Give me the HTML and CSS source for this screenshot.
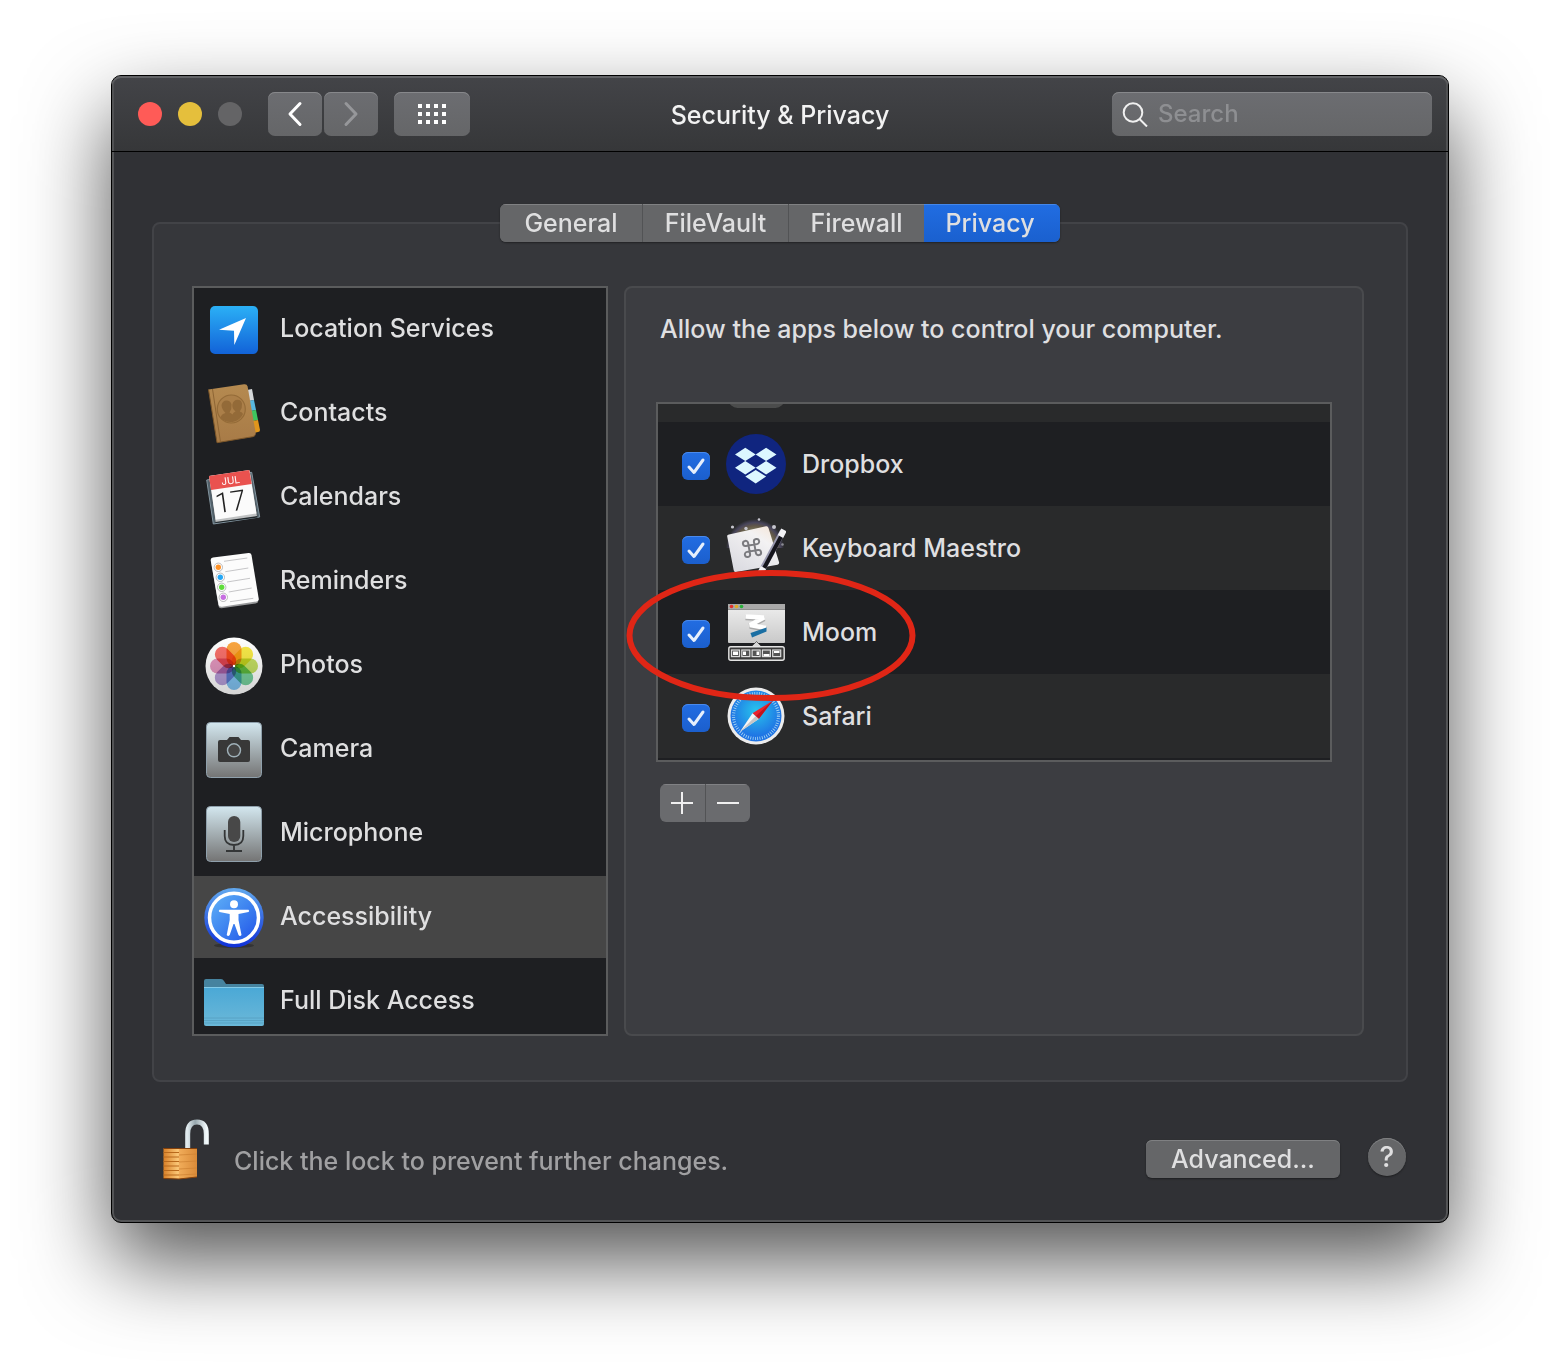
FILE: index.html
```html
<!DOCTYPE html>
<html lang="en">
<head>
<meta charset="utf-8">
<title>Security &amp; Privacy</title>
<link rel="stylesheet" href="styles.css">
</head>
<body>
<main class="window">
  <header class="titlebar">
    <div class="titlebar-left">
      <div class="lights">
        <button class="light light-close" aria-label="Close"></button>
        <button class="light light-minimize" aria-label="Minimize"></button>
        <button class="light light-zoom" aria-label="Zoom" disabled></button>
      </div>
      <div class="nav">
        <button class="tool" aria-label="Back">
          <svg width="16" height="26" viewBox="0 0 16 26"><path d="M13 2.500L3 13l10 10.500" fill="none" stroke="#fff" stroke-width="3" stroke-linecap="round" stroke-linejoin="round"/></svg>
        </button>
        <button class="tool" aria-label="Forward" disabled>
          <svg width="16" height="26" viewBox="0 0 16 26"><path d="M3 2.500L13 13L3 23.500" fill="none" stroke="#96979a" stroke-width="3" stroke-linecap="round" stroke-linejoin="round"/></svg>
        </button>
      </div>
      <button class="tool tool-wide" aria-label="Show all">
        <svg width="28" height="20" viewBox="0 0 28 20" fill="#fff"><path d="M0 0h4v4H0zM8 0h4v4H8zM16 0h4v4h-4zM24 0h4v4h-4zM0 8h4v4H0zM8 8h4v4H8zM16 8h4v4h-4zM24 8h4v4h-4zM0 16h4v4H0zM8 16h4v4H8zM16 16h4v4h-4zM24 16h4v4h-4z"/></svg>
      </button>
    </div>
    <h1 class="title">Security &amp; Privacy</h1>
    <label class="search">
      <svg width="26" height="26" viewBox="0 0 26 26" fill="none" stroke="#f0f0f0" stroke-width="2"><circle cx="11" cy="11.500" r="9.300"/><path d="M17.500 18l7.500 7.500"/></svg>
      <input type="search" placeholder="Search" aria-label="Search">
    </label>
  </header>

  <div class="content">
    <section class="group">
      <div class="tabs" role="tablist">
        <button class="tab" role="tab">General</button>
        <button class="tab" role="tab">FileVault</button>
        <button class="tab" role="tab">Firewall</button>
        <button class="tab tab-active" role="tab" aria-selected="true">Privacy</button>
      </div>

      <div class="panes">
        <ul class="services">
          <li><button class="service">
            <svg class="icon" viewBox="0 0 60 60"><defs><linearGradient id="loc" x2="0" y2="1"><stop stop-color="#2bb0f6"/><stop offset="1" stop-color="#1262d8"/></linearGradient></defs><rect x="6" y="6" width="48" height="48" rx="5" fill="url(#loc)"/><path d="M15 29.700L42 18L30.300 45L30 30.700z" fill="#fff"/></svg>
            Location Services</button></li>
          <li><button class="service">
            <svg class="icon" viewBox="0 0 60 60"><defs><linearGradient id="book" x2="0" y2="1"><stop stop-color="#b58a50"/><stop offset="1" stop-color="#a87b47"/></linearGradient></defs>
              <path d="M43 6l5-1 2 11-5 1z" fill="#d5d8da"/><path d="M44 17l6-1 2 10-5 1z" fill="#58b8e0"/><path d="M46 27l6-1 2 10-5 1z" fill="#3fc55f"/><path d="M48 37l6-1 2 10q0 2-2 2l-4 1z" fill="#e0961c"/>
              <path d="M4.500 5.500L40 .2q3-.4 3.600 2.300l8 46q.5 3.500-2.500 4.200L13 58.700z" fill="url(#book)"/>
              <path d="M4.500 5.500L13 58.700l35.700-6q2-.5 2.500-2.200" fill="none" stroke="#7c5629" stroke-width="1"/><path d="M8.500 5L16.500 58" stroke="#8e6534" stroke-width="1"/>
              <circle cx="27.300" cy="25" r="14" fill="#ab7f49" stroke="#946b38" stroke-width="1.200"/>
              <path d="M16.500 34q.5-4 5-5-4-4-4-8 1-4.500 5-4.500t5 4q.5 4-2 8 2 1 3 2 .5-2 3-3-4-3.500-3-7.500t5-4.200q4 .2 4.500 4t-2.200 7.700q2.700.5 3.200 2.500-3 6-8.500 7.500-8 2-14-3.500z" fill="#936a38"/></svg>
            Contacts</button></li>
          <li><button class="service">
            <svg class="icon" viewBox="0 0 60 60">
              <path d="M2.700 12L47.700 4.300L55.700 49L9.300 56z" fill="#52616a" stroke="#8395a0" stroke-width="1"/>
              <path d="M5.500 9L46 4L53.500 49.500L11.500 55z" fill="#20272b"/>
              <path d="M5.500 8L46 3L53 48L11.500 54z" fill="#bfc1c2"/><path d="M5 8L45.300 2L52.500 45.500L11.700 51.800z" fill="#fbfbfb"/>
              <path d="M5 8L45.300 2L47.700 16L7 22z" fill="#e9524f"/>
              <g transform="rotate(-8 28 30)" text-anchor="middle"><text class="cal-month" x="29" y="16">JUL</text><text class="cal-day" x="26" y="43">17</text></g></svg>
            Calendars</button></li>
          <li><button class="service">
            <svg class="icon" viewBox="0 0 60 60">
              <path d="M7 9L14.500 54q.6 2.500 3 2.200l34-4.700q3-.6 2.700-3z" fill="#98999b"/>
              <path d="M9 5.500L44.500 1q2.500-.3 3 2l7.200 43.500q.4 2.500-2.200 3L18 54.700q-3 .4-3.500-2.200L6.700 8.500Q6.300 6 9 5.500z" fill="#fcfcfc"/>
              <path d="M20 9.300L43.300 6M21.300 19.700L44.300 16M23 30L46 26.300M24.700 40L47.700 36M26 49.700L49.300 46.300" stroke="#b8b8ba" stroke-width=".8"/>
              <g fill="#fff" stroke="#a8a8ab" stroke-width=".8"><circle cx="14.300" cy="15.300" r="4.200"/><circle cx="16.300" cy="25.300" r="4.200"/><circle cx="17.700" cy="35.300" r="4.200"/><circle cx="19.300" cy="45.300" r="4.200"/></g>
              <circle cx="14.300" cy="15.300" r="2.700" fill="#ff9227"/><circle cx="16.300" cy="25.300" r="2.700" fill="#25a7f5"/><circle cx="17.700" cy="35.300" r="2.700" fill="#5fdc3b"/><circle cx="19.300" cy="45.300" r="2.700" fill="#c66ee0"/></svg>
            Reminders</button></li>
          <li><button class="service">
            <svg class="icon" viewBox="0 0 60 60"><defs><linearGradient id="ph" x2="0" y2="1"><stop stop-color="#fff"/><stop offset="1" stop-color="#d4d4d4"/></linearGradient></defs><circle cx="30" cy="30" r="28.500" fill="url(#ph)"/>
              <g class="petals">
                <rect x="22.500" y="6" width="15" height="24" rx="7.500" fill="#fba640"/>
                <rect x="22.500" y="6" width="15" height="24" rx="7.500" fill="#f8ea48" transform="rotate(45 30 30)"/>
                <rect x="22.500" y="6" width="15" height="24" rx="7.500" fill="#c3de62" transform="rotate(90 30 30)"/>
                <rect x="22.500" y="6" width="15" height="24" rx="7.500" fill="#76cf9c" transform="rotate(135 30 30)"/>
                <rect x="22.500" y="6" width="15" height="24" rx="7.500" fill="#80c2f0" transform="rotate(180 30 30)"/>
                <rect x="22.500" y="6" width="15" height="24" rx="7.500" fill="#b49cd6" transform="rotate(225 30 30)"/>
                <rect x="22.500" y="6" width="15" height="24" rx="7.500" fill="#e296be" transform="rotate(270 30 30)"/>
                <rect x="22.500" y="6" width="15" height="24" rx="7.500" fill="#f7706a" transform="rotate(315 30 30)"/>
              </g><circle cx="30" cy="30" r="1.200" fill="#fff"/></svg>
            Photos</button></li>
          <li><button class="service">
            <svg class="icon" viewBox="0 0 60 60"><defs><linearGradient id="tile" x2="0" y2="1"><stop stop-color="#d3e7ef"/><stop offset="1" stop-color="#747474"/></linearGradient></defs><rect x="2.500" y="2.500" width="55" height="55" rx="4" fill="url(#tile)" stroke="#8fa0ac" stroke-width="1"/><path d="M16 20h7l2.500-3h9l2.500 3h7q2 0 2 2v18q0 2-2 2H16q-2 0-2-2V22q0-2 2-2z" fill="#383838"/><circle cx="30" cy="30.300" r="6.500" fill="#444" stroke="#9fb0b8" stroke-width="1.400"/></svg>
            Camera</button></li>
          <li><button class="service">
            <svg class="icon" viewBox="0 0 60 60"><rect x="2.500" y="2.500" width="55" height="55" rx="4" fill="url(#tile)" stroke="#8fa0ac" stroke-width="1"/><rect x="24" y="12" width="12.300" height="26" rx="6.100" fill="#484848"/><path d="M20.700 26v6q0 9 9.300 9t9.300-9v-6M30 41v6M22 47h16" fill="none" stroke="#343637" stroke-width="1.800"/></svg>
            Microphone</button></li>
          <li><button class="service service-active" aria-current="true">
            <svg class="icon" viewBox="0 0 60 60"><defs><linearGradient id="acc" x2="1" y2="1"><stop stop-color="#63b4f8"/><stop offset=".5" stop-color="#3f85f0"/><stop offset="1" stop-color="#1f50e8"/></linearGradient><linearGradient id="acr" x2="0" y2="1"><stop stop-color="#62a9ee"/><stop offset="1" stop-color="#0f30d8"/></linearGradient></defs><ellipse cx="30" cy="57.500" rx="20" ry="2.500" fill="#333"/><circle cx="30" cy="29.700" r="29.700" fill="url(#acr)"/><circle cx="30" cy="29.700" r="24.500" fill="url(#acc)" stroke="#fff" stroke-width="3.500"/><circle cx="30" cy="16.300" r="4" fill="#fff"/><path d="M15.500 21.700L26 21.800h8L44.500 21.700q1.500 1.200 0 2.200L34.500 26v6l3 15q-1.500 2-3 0L30.500 36h-1L25.700 47q-1.500 2-3 0l3-15v-6L15.500 23.900q-1.500-1 0-2.200z" fill="#fff"/></svg>
            Accessibility</button></li>
          <li><button class="service">
            <svg class="icon" viewBox="0 0 60 60"><defs><linearGradient id="fold" x2="0" y2="1"><stop stop-color="#4aa8d6"/><stop offset="1" stop-color="#6bb8d8"/></linearGradient></defs><path d="M0 9q0-2 2-2h15q2 0 3 2l2 3h36q2 0 2 2v10H0z" fill="#46839f"/><path d="M0 15h60v37q0 2-2 2H2q-2 0-2-2z" fill="url(#fold)"/><path d="M0 15.500h60" stroke="#84cbe8"/><path d="M0 46h60M0 48.500h60M0 51h60" stroke="#559fc0" stroke-width=".8"/></svg>
            Full Disk Access</button></li>
        </ul>

        <section class="detail">
          <p class="detail-text">Allow the apps below to control your computer.</p>
          <div class="apps-area">
            <div class="apps-view">
              <ul class="apps">
                <li class="app"><svg class="icon app-icon" viewBox="0 0 60 60"><rect x="2.500" y="2" width="56" height="56" rx="9" fill="#4b4c4c"/></svg></li>
                <li class="app"><label class="app-label">
                  <span class="check"><input type="checkbox" checked><svg viewBox="0 0 28 28"><path d="M7 15L12 20.500L21 8"/></svg></span>
                  <svg class="icon" viewBox="0 0 60 60"><circle cx="30" cy="30" r="30" fill="#10257f"/><path d="M19.300 13.700l10.400 6.700 10.400-6.700 10.400 6.700-10.400 6.700 10.400 6.700-10.400 6.700-10.400-6.700-10.400 6.700L9 33.800l10.300-6.700L9 20.400zM29.700 20.400l-10.400 6.700 10.400 6.700 10.400-6.700zM19.300 42.600l10.400-6.700 10.400 6.700-10.400 6.800z" fill="#dcf7ff" fill-rule="evenodd"/></svg>
                  Dropbox</label></li>
                <li class="app"><label class="app-label">
                  <span class="check"><input type="checkbox" checked><svg viewBox="0 0 28 28"><path d="M7 15L12 20.500L21 8"/></svg></span>
                  <svg class="icon" viewBox="0 0 60 60"><defs><radialGradient id="glow" gradientUnits="userSpaceOnUse" cx="29" cy="30" r="29"><stop offset=".6" stop-color="#7d7a60"/><stop offset=".76" stop-color="#625848"/><stop offset=".88" stop-color="#49465c"/><stop offset="1" stop-color="#292a2b"/></radialGradient><linearGradient id="key" x1="1" y1="0" x2=".3" y2="1"><stop stop-color="#f6e4d4"/><stop offset=".35" stop-color="#f3f2f3"/><stop offset="1" stop-color="#dcdce2"/></linearGradient></defs>
                    <path d="M0 30A29 29 0 0 1 58 30z" fill="url(#glow)"/>
                    <g fill="#c6c6ce"><circle cx="6.500" cy="9" r="1.600"/><circle cx="20" cy="10.500" r="1.700"/><circle cx="33" cy="1.500" r="1.300"/><circle cx="48" cy="9" r="2"/><circle cx="56.500" cy="26.500" r="1.300" opacity=".6"/></g>
                    <path d="M3 16.500L40 8.300q2-.4 2.500 1.700L53 44q.6 2-1.500 2.700L10 54q-2 .4-2.300-1.700L1.200 18.500q-.4-1.600 1.800-2z" fill="url(#key)"/>
                    <g transform="translate(26 30) rotate(-10) scale(.9)" fill="none" stroke="#7b7b7f" stroke-width="2.200"><path d="M-3.300-3.300h6.600v6.600h-6.600zM-3.300-3.300v-2.900a2.900 2.900 0 1 0-2.900 2.900h2.900M3.300-3.300h2.900a2.900 2.900 0 1 0-2.900-2.900zM3.300 3.300v2.900a2.900 2.900 0 1 0 2.900-2.900zM-3.300 3.300h-2.900a2.900 2.900 0 1 0 2.900 2.900z"/></g>
                    <path d="M57 13L35 54" stroke="#9a9ab0" stroke-width="6"/><path d="M57.500 14L36 54" stroke="#15151c" stroke-width="4"/><path d="M58 12l-3.500 6.500M37.500 49.500l-3 5.500" stroke="#f2f2f5" stroke-width="6"/></svg>
                  Keyboard Maestro</label></li>
                <li class="app"><label class="app-label">
                  <span class="check"><input type="checkbox" checked><svg viewBox="0 0 28 28"><path d="M7 15L12 20.500L21 8"/></svg></span>
                  <svg class="icon" viewBox="0 0 60 60"><defs><linearGradient id="mo" x2="0" y2="1"><stop stop-color="#efefef"/><stop offset="1" stop-color="#c9c9c9"/></linearGradient></defs>
                    <rect x="2" y="2" width="57" height="39" rx="1" fill="url(#mo)"/><path d="M2 2h57v5H2z" fill="#a9a9a9"/><path d="M2 7.500h57" stroke="#777" stroke-width=".8"/><circle cx="5.500" cy="4.500" r="1.800" fill="#e0302c"/><circle cx="10.500" cy="4.500" r="1.800" fill="#e2aa22"/><circle cx="15.500" cy="4.500" r="1.800" fill="#28b13a"/>
                    <path d="M19.500 15.500l18.500 1-14 7.500 16 3" fill="none" stroke="#aaa" stroke-width="5.500" stroke-linejoin="bevel"/><path d="M19.500 14.500l18.500 1-14 7.500 16 3" fill="none" stroke="#fff" stroke-width="4.500" stroke-linejoin="bevel"/><path d="M40.500 25.500v4L26 35.500l-1.500-4.500z" fill="#1b6fa3"/>
                    <path d="M25.500 44.500l5-5 5 5z" fill="#d8d8d8" stroke="#333" stroke-width=".7"/>
                    <rect x="2.800" y="44.800" width="55.400" height="13.400" rx="2" fill="#3c3c3c" stroke="#e3e3e3" stroke-width="1.400"/>
                    <g fill="#555" stroke="#ddd" stroke-width="1.200"><rect x="5.500" y="48" width="8" height="6.600"/><rect x="15.800" y="48" width="8" height="6.600"/><rect x="26.100" y="48" width="8" height="6.600"/><rect x="36.400" y="48" width="8" height="6.600"/><rect x="46.700" y="48" width="8" height="6.600"/></g><path d="M7 49.500h5v3.600H7zM17 49.500h3v3.600h-3zM30.500 49.500h2.500v3.600h-2.500zM37.500 52h6v2h-6zM48 49h5.500v2H48z" fill="#fff"/></svg>
                  Moom</label></li>
                <li class="app"><label class="app-label">
                  <span class="check"><input type="checkbox" checked><svg viewBox="0 0 28 28"><path d="M7 15L12 20.500L21 8"/></svg></span>
                  <svg class="icon" viewBox="0 0 60 60"><defs><radialGradient id="saf" cy=".4"><stop stop-color="#28c4ec"/><stop offset="1" stop-color="#1f74e4"/></radialGradient></defs><circle cx="30" cy="30" r="28.500" fill="#ececec"/><circle cx="30" cy="30" r="25.500" fill="url(#saf)"/><circle cx="30" cy="30" r="22.500" fill="none" stroke="#a9d8f5" stroke-width="3.200" stroke-dasharray=".8 1.556"/><path d="M46.700 14.700L26.500 27.300l6.200 5.700z" fill="#e9232d"/><path d="M46.700 14.700L29.600 30.200l3.100 2.800z" fill="#c0141f"/><path d="M14 45.700L26.500 27.300l6.200 5.700z" fill="#f5f5f5"/><path d="M14 45.700L29.600 30.200l3.100 2.800z" fill="#c6c6c6"/></svg>
                  Safari</label></li>
              </ul>
            </div>
            <svg class="highlight" viewBox="0 0 290 132"><ellipse cx="145" cy="65.500" rx="141.500" ry="62.500" fill="none" stroke="#e02616" stroke-width="6"/></svg>
          </div>
          <div class="edit">
            <button class="edit-button" aria-label="Add"><svg width="22" height="22" viewBox="0 0 22 22"><path d="M0 11h22M11 0v22" stroke="#f0f0f0" stroke-width="2"/></svg></button>
            <button class="edit-button" aria-label="Remove"><svg width="22" height="22" viewBox="0 0 22 22"><path d="M0 11h22" stroke="#f0f0f0" stroke-width="2"/></svg></button>
          </div>
        </section>
      </div>
    </section>

    <footer class="footer">
      <button class="lock" aria-label="Lock">
        <svg width="47" height="61" viewBox="0 0 47 61"><defs><linearGradient id="lk" x2="1"><stop stop-color="#d98028"/><stop offset=".44" stop-color="#fbc878"/><stop offset=".48" stop-color="#f0ab58"/><stop offset="1" stop-color="#d98a38"/></linearGradient><linearGradient id="sh" x2="1"><stop stop-color="#dfe9ed"/><stop offset=".4" stop-color="#97a7ae"/><stop offset="1" stop-color="#f2f9fb"/></linearGradient></defs><path d="M24.700 30V15q0-12 9.300-12t9.300 12v10.500" fill="none" stroke="url(#sh)" stroke-width="5"/><path d="M.5 29H34v29l-18 2L.5 59z" fill="url(#lk)"/><path d="M.5 33.500H16M.5 38H16M.5 42.500H16M.5 47H16M.5 51.500H16M.5 56H16" stroke="#b8691c" stroke-width="1"/><path d="M16 36l18-1M16 43l18-1M16 50l18-1M16 56l18-1" stroke="#cf8435" stroke-width=".8"/><path d="M.5 29.500H34M.5 59.500l15.500.5 18-2" fill="none" stroke="#85410b"/></svg>
      </button>
      <p class="footer-text">Click the lock to prevent further changes.</p>
      <button class="push">Advanced...</button>
      <button class="help" aria-label="Help">?</button>
    </footer>
  </div>
</main>
</body>
</html>
```
FILE: styles.css
```css
* {
  box-sizing: border-box;
}

body {
  margin: 0;
  padding: 75px 111px 146px;
  background: #fff;
  color: #dfdfe0;
  font-family: Inter, "Liberation Sans", sans-serif;
  font-size: 25px;
  font-weight: 500;
  line-height: 32px;
}

button,
input {
  margin: 0;
  padding: 0;
  border: 0;
  color: inherit;
  font: inherit;
}

ul,
p,
h1 {
  margin: 0;
  padding: 0;
  list-style: none;
}

svg {
  display: block;
  flex: none;
}

.window {
  position: relative;
  border: 1px solid #000;
  border-radius: 10px;
  background: #303135;
  box-shadow: inset 0 0 0 2px #535456, 0 38px 84px rgba(0, 0, 0, 0.68);
}

.titlebar {
  display: grid;
  grid-template-columns: 1fr auto 1fr;
  align-items: center;
  height: 76px;
  border-bottom: 1px solid #000;
  border-radius: 9px 9px 0 0;
  background: linear-gradient(#434448, #363739);
  box-shadow: inset 0 2px #626366, inset 2px 0 #505153, inset -2px 0 #505153;
}

.titlebar-left {
  display: flex;
  align-items: center;
  padding-left: 26px;
}

.lights {
  display: flex;
  gap: 16px;
  margin-right: 26px;
}

.light {
  width: 24px;
  height: 24px;
  border-radius: 50%;
}

.light-close {
  background: #ff5b57;
}

.light-minimize {
  background: #e5bf3c;
}

.light-zoom {
  background: #646466;
}

.nav {
  display: flex;
  gap: 2px;
  margin-right: 16px;
}

.tool {
  display: grid;
  place-items: center;
  width: 54px;
  height: 44px;
  border-radius: 7px;
  background: linear-gradient(#6c6d71, #656668);
  box-shadow: inset 0 1px #87888b;
}

.tool-wide {
  width: 76px;
}

.title {
  padding-top: 2px;
  color: #f2f2f2;
  font-size: 25px;
  font-weight: 500;
}

.search {
  display: flex;
  align-items: center;
  justify-self: end;
  gap: 10px;
  width: 320px;
  height: 44px;
  margin-right: 16px;
  padding: 0 10px;
  border-radius: 7px;
  background: linear-gradient(#6c6d71, #656668);
  box-shadow: inset 0 1px #87888b;
  font-size: 24px;
}

.search input {
  flex: 1;
  min-width: 0;
  outline: 0;
  background: none;
}

.search input::placeholder {
  color: #8e8f92;
  opacity: 1;
}

.content {
  padding: 70px 40px 40px;
}

.group {
  border: 2px solid #424347;
  border-radius: 8px;
  background: #36373b;
}

.tabs {
  display: grid;
  grid-template-columns: 143fr 146fr 135fr 136fr;
  width: 560px;
  margin: -20px auto 0;
  overflow: hidden;
  border-radius: 6px;
  background: #656668;
  box-shadow: 0 1px 2px rgba(0, 0, 0, 0.4);
}

.tab {
  height: 38px;
  border-right: 1px solid #525355;
  background: #656668;
  box-shadow: inset 0 1px #808183;
}

.tab:nth-child(3) {
  border-right: 0;
}

.tab-active {
  padding-right: 4px;
  border-right: 0;
  background: linear-gradient(#216de2, #1a60cf);
  box-shadow: inset 0 1px #4487ea;
}

.panes {
  display: flex;
  gap: 16px;
  padding: 44px 42px 44px 38px;
}

.services {
  width: 416px;
  height: 750px;
  overflow: hidden;
  border: 2px solid #5b5c5d;
  background: #1e1f22;
}

.service {
  display: flex;
  align-items: center;
  gap: 16px;
  width: 100%;
  height: 82px;
  margin-bottom: 2px;
  padding: 0 10px 2px;
  background: none;
  text-align: left;
}

.service-active {
  background: #464646;
}

.icon {
  width: 60px;
  height: 60px;
}

.service .icon {
  margin-top: 4px;
}

.cal-month {
  fill: #fff;
  font-family: Inter, sans-serif;
  font-size: 10px;
  font-weight: 400;
}

.cal-day {
  fill: #222;
  font-family: Roboto, sans-serif;
  font-size: 28px;
  font-weight: 300;
}

.petals rect {
  mix-blend-mode: multiply;
}

.detail {
  flex: 1;
  min-width: 0;
  padding: 25px 30px;
  border: 2px solid #494a4d;
  border-radius: 8px;
  background: #3c3d41;
}

.detail-text {
  padding-left: 4px;
}

.apps-area {
  position: relative;
  margin-top: 57px;
}

.apps-view {
  height: 360px;
  overflow: hidden;
  border: 2px solid #5b5c5d;
  background: #1e1f22;
}

.apps {
  margin-top: -66px;
}

.app {
  height: 84px;
  background: #1e1f22;
}

.app:nth-child(odd) {
  background: #292a2b;
}

.app-label {
  display: flex;
  align-items: center;
  gap: 16px;
  height: 84px;
  padding-left: 24px;
}

.app-icon {
  margin-left: 68px;
  padding-top: 12px;
  height: 72px;
}

.check {
  display: grid;
  width: 28px;
  height: 28px;
  margin-top: 4px;
}

.check > * {
  grid-area: 1 / 1;
}

.check input {
  appearance: none;
  border-radius: 6px;
  background: linear-gradient(#226de2, #1b5fcd);
  box-shadow: inset 0 1px #4a8aec;
}

.check svg {
  z-index: 1;
  fill: none;
  stroke: #e6effc;
  stroke-width: 3;
  stroke-linecap: round;
  stroke-linejoin: round;
  pointer-events: none;
}

.highlight {
  position: absolute;
  top: 168px;
  left: -30px;
  width: 290px;
  height: 132px;
  pointer-events: none;
}

.edit {
  display: flex;
  width: 90px;
  margin: 22px 4px 0;
  overflow: hidden;
  border-radius: 6px;
}

.edit-button {
  display: grid;
  flex: 1;
  place-items: center;
  height: 38px;
  background: #6a6b6e;
  box-shadow: inset 0 1px #808184;
}

.edit-button + .edit-button {
  border-left: 1px solid #525355;
}

.footer {
  display: flex;
  align-items: center;
  padding: 37px 2px 2px 11px;
}

.lock {
  margin-right: 24px;
  background: none;
}

.footer-text {
  flex: 1;
  padding-top: 22px;
  color: #a0a0a2;
}

.push {
  width: 194px;
  height: 38px;
  margin: 18px 28px 0 0;
  border-radius: 6px;
  background: #656668;
  box-shadow: inset 0 1px #7f8082, 0 1px 2px rgba(0, 0, 0, 0.4);
}

.help {
  width: 38px;
  height: 38px;
  margin-top: 14px;
  border-radius: 50%;
  background: #656668;
  box-shadow: inset 0 1px #7f8082, 0 1px 2px rgba(0, 0, 0, 0.4);
  font-size: 28px;
}
```
